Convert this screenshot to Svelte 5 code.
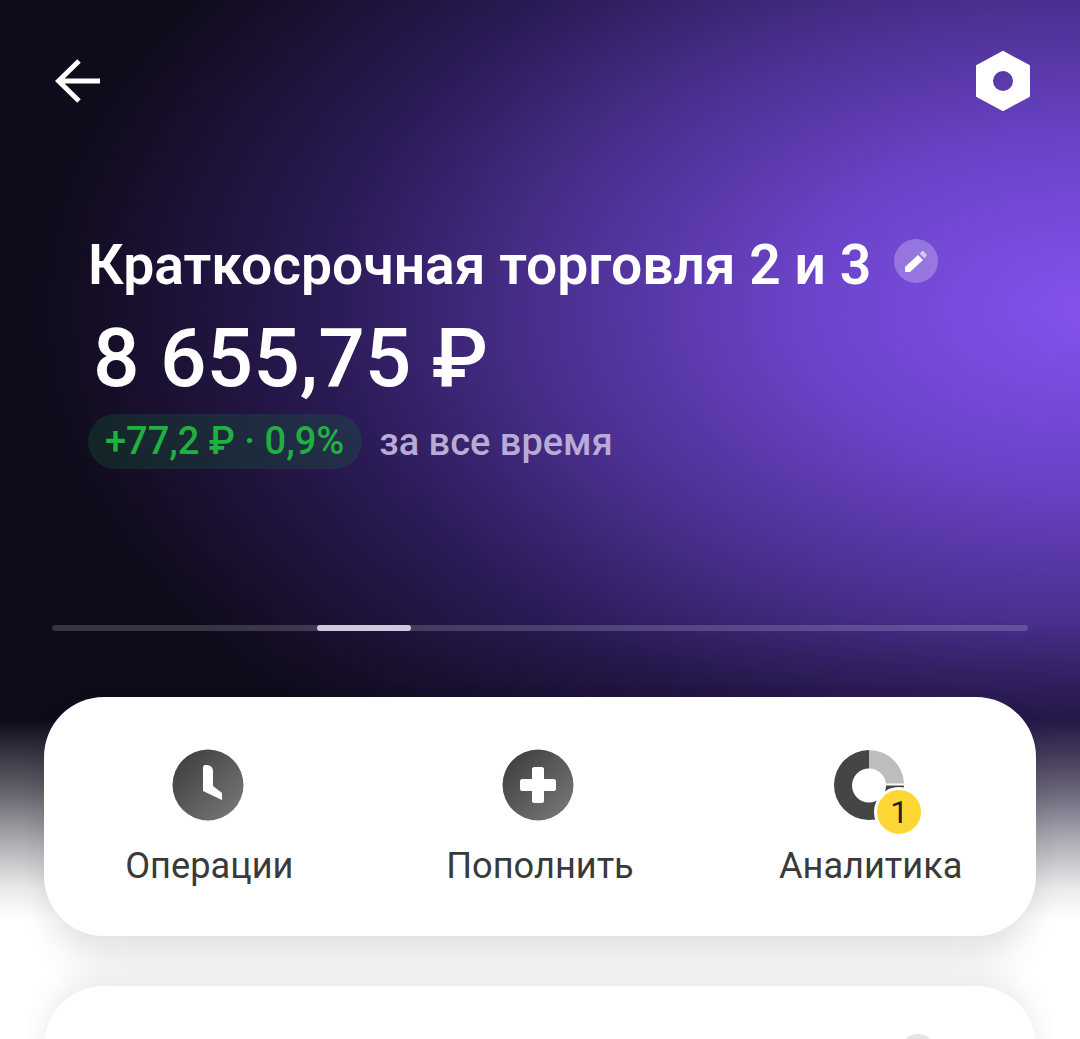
<script>
  const actions = [
    { id: "ops", label: "Операции" },
    { id: "add", label: "Пополнить" },
    { id: "stats", label: "Аналитика" },
  ];
</script>

<div class="page">
  <header class="topbar">
    <button class="icon-btn" aria-label="Назад">
      <svg width="46" height="46" viewBox="0 0 46 46">
        <path d="M45 23H3M24 3 3.500 23 24 43" fill="none" stroke="#fff" stroke-width="5" />
      </svg>
    </button>
    <button class="icon-btn" aria-label="Настройки">
      <svg width="58" height="62" viewBox="0 0 58 62">
        <path
          fill="#fff"
          fill-rule="evenodd"
          stroke="#fff"
          stroke-width="2"
          stroke-linejoin="round"
          d="M29 2 55 16V46L29 60 3 46V16ZM29 20A11 11 0 1 0 29 42 11 11 0 1 0 29 20Z"
        />
      </svg>
    </button>
  </header>

  <section class="summary">
    <div class="title-row">
      <h1>Краткосрочная торговля 2 и 3</h1>
      <span class="edit">
        <svg width="26" height="26" viewBox="0 0 26 26">
          <path d="M2 19 15 7 20 12 7 24H2Z" fill="#fff" />
          <path d="M16.500 5.500 20 2.500 24 7 21.500 10.500Z" fill="#fff" opacity="0.6" />
        </svg>
      </span>
    </div>
    <div class="amount">8 655,75 ₽</div>
    <div class="change-row">
      <span class="pill">+77,2 ₽ · 0,9%</span>
      <span class="period">за все время</span>
    </div>
  </section>

  <div class="track"><div class="thumb"></div></div>

  <section class="card actions">
    {#each actions as action}
      <div class="action">
        <span class="glyph">
          {#if action.id === "ops"}
            <svg width="72" height="72" viewBox="0 0 72 72">
              <circle cx="36" cy="36" r="35.500" fill="url(#disc1)" />
              <path
                d="M31 18.500C31 16.500 32.500 16 34 16 38 16 41 18 41 22V37L50 44V51L31 42Z"
                fill="#fff"
              />
              <defs>
                <linearGradient id="disc1" x1="0.100" y1="0.100" x2="0.900" y2="0.900">
                  <stop offset="0" stop-color="#404040" />
                  <stop offset="1" stop-color="#757575" />
                </linearGradient>
              </defs>
            </svg>
          {:else if action.id === "add"}
            <svg width="72" height="72" viewBox="0 0 72 72">
              <circle cx="36" cy="36" r="35.500" fill="url(#disc2)" />
              <path
                d="M30 20C30 19 31 18 32 18H40C41 18 42 19 42 20V30H52C53 30 54 31 54 32V40C54 41 53 42 52 42H42V52C42 53 41 54 40 54H32C31 54 30 53 30 52V42H20C19 42 18 41 18 40V32C18 31 19 30 20 30H30Z"
                fill="#fff"
              />
              <defs>
                <linearGradient id="disc2" x1="0.100" y1="0.100" x2="0.900" y2="0.900">
                  <stop offset="0" stop-color="#404040" />
                  <stop offset="1" stop-color="#757575" />
                </linearGradient>
              </defs>
            </svg>
          {:else}
            <svg width="72" height="72" viewBox="0 0 72 72">
              <path
                d="M36 1A35 35 0 1 0 71 36.500H53A17 17 0 1 1 36 19.500Z"
                fill="#454545"
              />
              <path d="M36 1A35 35 0 0 1 71 34.500H53A17 17 0 0 0 36 19.500Z" fill="#bdbdbd" />
            </svg>
            <span class="count">1</span>
          {/if}
        </span>
        <span class="label">{action.label}</span>
      </div>
    {/each}
  </section>

  <section class="card next">
    <span class="next-dot"></span>
  </section>
</div>

<style>
  :global(body) {
    background: #fff;
  }

  .page {
    height: 1039px;
    overflow: hidden;
    font-family: Roboto, "Noto Sans", sans-serif;
    color: #fff;
    background:
      linear-gradient(to bottom, rgba(255, 255, 255, 0) 720px, rgba(255, 255, 255, 0.35) 790px, rgba(255, 255, 255, 0.65) 840px, rgba(255, 255, 255, 0.92) 890px, #fff 920px),
      linear-gradient(to bottom, rgba(16, 11, 27, 0) 620px, rgba(16, 11, 27, 0.3) 700px, rgba(16, 11, 27, 0.5) 760px),
      radial-gradient(ellipse 1050px 600px at 1090px 310px, #8453ee 0%, #6a43c8 28%, #4a2f8e 52%, #2a1a55 73%, #100b1b 100%);
    background-color: #100b1b;
  }

  .topbar {
    display: flex;
    justify-content: space-between;
    align-items: center;
    padding: 50px 48px 0 55px;
  }

  .icon-btn {
    display: block;
    padding: 0;
    border: 0;
    background: none;
    line-height: 0;
  }

  .summary {
    padding: 0 0 0 88px;
    margin-top: 123px;
  }

  .title-row {
    display: flex;
    align-items: center;
    gap: 23px;
    height: 60px;
  }

  h1 {
    margin: 0;
    font-size: 55.200px;
    font-weight: 600;
    line-height: 60px;
    white-space: nowrap;
  }

  .edit {
    display: flex;
    align-items: center;
    justify-content: center;
    width: 44px;
    height: 44px;
    margin-top: -8px;
    border-radius: 50%;
    background: rgba(255, 255, 255, 0.25);
  }

  .amount {
    margin: 17px 0 0 5px;
    font-size: 82px;
    font-weight: 500;
    line-height: 92px;
    white-space: nowrap;
  }

  .change-row {
    display: flex;
    align-items: center;
    gap: 17px;
    margin-top: 10px;
  }

  .pill {
    display: block;
    height: 55px;
    padding: 0 18px 0 17px;
    border-radius: 28px;
    background: rgba(25, 110, 60, 0.25);
    color: #1fb13f;
    font-size: 38px;
    font-weight: 500;
    line-height: 55px;
    white-space: nowrap;
  }

  .period {
    color: #b9aad6;
    font-size: 38px;
    font-weight: 500;
    white-space: nowrap;
  }

  .track {
    height: 6px;
    margin: 156px 52px 0;
    border-radius: 3px;
    background: rgba(255, 255, 255, 0.17);
    padding-left: 265px;
  }

  .thumb {
    width: 94px;
    height: 6px;
    border-radius: 3px;
    background: #cfc9de;
  }

  .card {
    margin: 0 44px;
    background: #fff;
    border-radius: 60px;
  }

  .actions {
    position: relative;
    z-index: 1;
    display: grid;
    grid-template-columns: repeat(3, 1fr);
    height: 239px;
    margin-top: 66px;
    box-shadow:
      0 36px 36px -8px rgba(0, 0, 0, 0.075),
      0 8px 30px rgba(0, 0, 0, 0.05);
  }

  .action {
    display: flex;
    flex-direction: column;
    align-items: center;
    padding-top: 52px;
  }

  .glyph {
    position: relative;
    display: block;
    width: 72px;
    height: 72px;
    margin-right: 3px;
    line-height: 0;
  }

  .count {
    position: absolute;
    left: 41px;
    top: 38px;
    width: 44px;
    height: 44px;
    border: 3px solid #fff;
    border-radius: 50%;
    background: #fdd835;
    color: #222;
    font-size: 32px;
    line-height: 44px;
    text-align: center;
  }

  .label {
    margin-top: 23px;
    color: #3a3a3a;
    font-size: 36.200px;
    font-weight: 450;
    line-height: 44px;
    white-space: nowrap;
  }

  .next {
    position: relative;
    height: 200px;
    margin-top: 50px;
    box-shadow:
      0 -24px 36px -8px rgba(0, 0, 0, 0.05),
      0 0 30px rgba(0, 0, 0, 0.05);
  }

  .next-dot {
    position: absolute;
    left: 856px;
    top: 48px;
    width: 36px;
    height: 36px;
    border-radius: 50%;
    background: #e6e6e6;
  }
</style>
